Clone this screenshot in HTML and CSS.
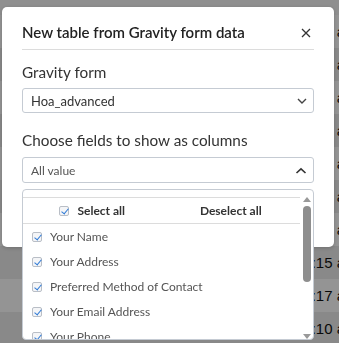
FILE: index.html
```html
<html>
    <head>
        <title>New table</title>
        <link rel="stylesheet" href="styles.css">
    </head>
    <body>
        <!--Pagina de fondo (tabla de entradas)-->
        <div class="page">
            <div class="row">10:45 am</div>
            <div class="row dark">10:40 am</div>
            <div class="row">10:36 am</div>
            <div class="row dark">10:31 am</div>
            <div class="row">10:28 am</div>
            <div class="row dark">10:22 am</div>
            <div class="row">10:19 am</div>
            <div class="row dark">10:15 am</div>
            <div class="row">10:17 am</div>
            <div class="row dark">10:10 am</div>
        </div>

        <div class="overlay">
            <div class="modal">
                <div class="modal-header">
                    <h3 class="modal-title">New table from Gravity form data</h3>
                    <svg class="close" width="10" height="10" viewBox="0 0 10 10">
                        <path d="M1 1 L9 9 M9 1 L1 9" stroke="#333" stroke-width="1.3" fill="none"/>
                    </svg>
                </div>
                <div class="modal-body">
                    <div class="field-label">Gravity form</div>
                    <div class="select">
                        <span>Hoa_advanced</span>
                        <svg width="10" height="6" viewBox="0 0 10 6">
                            <path d="M1 1 L5 5 L9 1" stroke="#444" stroke-width="1.4" fill="none"/>
                        </svg>
                    </div>

                    <div class="field-label second">Choose fields to show as columns</div>
                    <div class="multi">
                        <div class="select small">
                            <span>All value</span>
                            <svg width="12" height="7" viewBox="0 0 12 7">
                                <path d="M1.5 6 L6 1.8 L10.5 6" stroke="#333" stroke-width="1.6" fill="none"/>
                            </svg>
                        </div>
                        <!--Lista desplegable de campos-->
                        <div class="dropdown">
                            <div class="list">
                                <div class="search"></div>
                                <div class="actions">
                                    <div class="action"><span class="check"></span>Select all</div>
                                    <div class="action">Deselect all</div>
                                </div>
                                <div class="item"><span class="check"></span>Your Name</div>
                                <div class="item"><span class="check"></span>Your Address</div>
                                <div class="item"><span class="check"></span>Preferred Method of Contact</div>
                                <div class="item"><span class="check"></span>Your Email Address</div>
                                <div class="item"><span class="check"></span>Your Phone</div>
                            </div>
                            <div class="scrollbar">
                                <span class="arrow up"></span>
                                <div class="thumb"></div>
                                <div class="track"></div>
                                <span class="arrow down"></span>
                            </div>
                        </div>
                    </div>
                </div>
            </div>
        </div>
    </body>
</html>
```

FILE: styles.css
```css
body
{
    margin: 0;
    background-color: #f7f7f7;
    font-family: Lato, "Open Sans", sans-serif;
    overflow: hidden;
}
.page
{
    padding-top: 15px;
}
.row
{
    height: 33px;
    line-height: 33px;
    padding-left: 295px;
    background-color: #ffffff;
    color: #111;
    font-family: "Liberation Sans", sans-serif;
    font-size: 15px;
    white-space: nowrap;
}
.row.dark
{
    background-color: #ececec;
}
.overlay
{
    position: fixed;
    top: 0;
    left: 0;
    right: 0;
    bottom: 0;
    background-color: rgba(0, 0, 0, 0.42);
    padding: 7px 0 0 2px;
}
.modal
{
    width: 332px;
    height: 240px;
    background-color: #fff;
    border-radius: 5px;
    box-shadow: 0 1px 4px rgba(0, 0, 0, 0.2);
    padding: 0 20px;
    box-sizing: border-box;
}
.modal-header
{
    display: flex;
    align-items: center;
    justify-content: space-between;
    padding: 16px 0 7px 0;
    border-bottom: 1px solid #dcdcdc;
}
.modal-title
{
    margin: 0;
    font-size: 15px;
    line-height: 19px;
    font-weight: 600;
    color: #222;
}
.close
{
    margin-right: 3px;
}
.field-label
{
    margin-top: 12px;
    font-size: 15.3px;
    line-height: 20px;
    color: #333;
}
.field-label.second
{
    margin-top: 17px;
}
.select
{
    margin-top: 6px;
    height: 25px;
    box-sizing: border-box;
    border: 1px solid #c5cbd3;
    border-radius: 3px;
    display: flex;
    align-items: center;
    justify-content: space-between;
    padding: 0 6px 0 8px;
    font-size: 13px;
    color: #333;
}
.select.small
{
    margin-top: 7px;
    height: 26px;
    font-size: 12px;
    color: #555;
}
.multi
{
    position: relative;
}
.dropdown
{
    position: absolute;
    top: 32px;
    left: 0;
    width: 292px;
    height: 151px;
    box-sizing: border-box;
    background-color: #fff;
    border: 1px solid #c5cbd3;
    border-radius: 4px;
    display: flex;
    overflow: hidden;
}
.list
{
    flex: 1;
}
.search
{
    height: 7px;
    border-bottom: 1px solid #dcdcdc;
}
.actions
{
    display: flex;
    height: 25px;
    border-bottom: 1px solid #dcdcdc;
}
.action
{
    flex: 1;
    display: flex;
    align-items: center;
    justify-content: center;
    font-size: 12px;
    font-weight: 700;
    color: #333;
}
.item
{
    height: 25px;
    display: flex;
    align-items: center;
    padding-left: 9px;
    font-size: 12px;
    color: #555;
    white-space: nowrap;
}
.check
{
    width: 10px;
    height: 10px;
    box-sizing: border-box;
    border: 1px solid #b9bec6;
    border-radius: 2px;
    background-color: #f4f5f7;
    margin-right: 8px;
    position: relative;
}
.check::after
{
    content: "";
    position: absolute;
    left: 2.5px;
    top: 0px;
    width: 3px;
    height: 6px;
    border-right: 1.6px solid #2f7ad6;
    border-bottom: 1.6px solid #2f7ad6;
    transform: rotate(40deg);
}
.scrollbar
{
    width: 13px;
    display: flex;
    flex-direction: column;
    align-items: center;
    padding-top: 7px;
}
.arrow
{
    width: 0;
    height: 0;
    border-left: 4px solid transparent;
    border-right: 4px solid transparent;
}
.arrow.up
{
    border-bottom: 5px solid #999;
}
.arrow.down
{
    border-top: 5px solid #999;
}
.thumb
{
    margin-top: 4px;
    width: 8px;
    height: 76px;
    border-radius: 4px;
    background-color: #8e8e8e;
}
.track
{
    flex: 1;
}
```
